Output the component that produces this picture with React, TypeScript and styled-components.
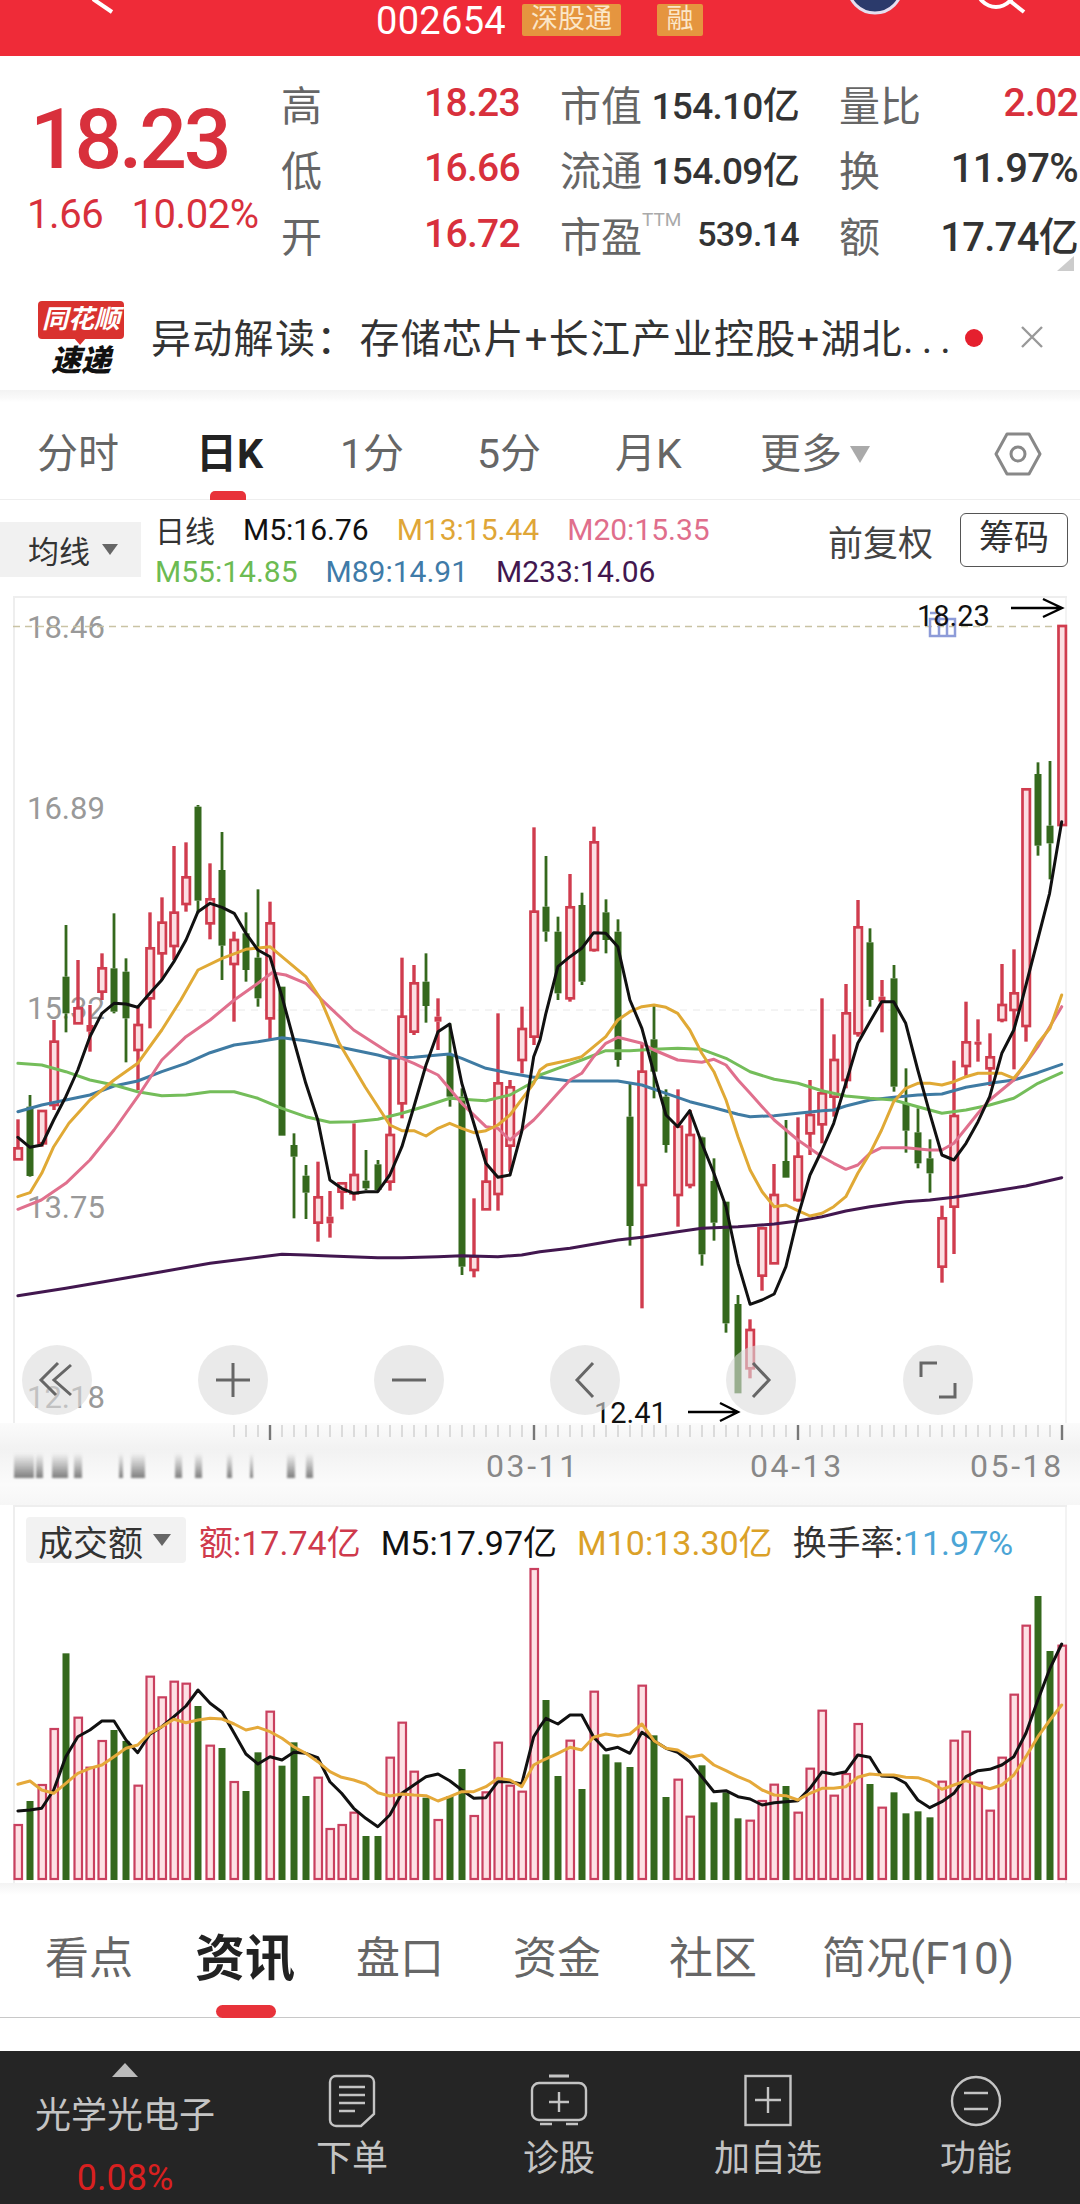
import React from "react";
import styled, { createGlobalStyle } from "styled-components";

const FONT = `Roboto, "Noto Sans CJK SC", sans-serif`;

const Global = createGlobalStyle`
  html, body { margin: 0; padding: 0; background: #fff; }
  body { width: 1080px; height: 2204px; overflow: hidden; font-family: ${FONT}; }
  * { box-sizing: border-box; }
`;

const Page = styled.div`
  width: 1080px;
  height: 2204px;
  display: flex;
  flex-direction: column;
  overflow: hidden;
  background: #fff;
`;

/* ---------- header ---------- */
const Header = styled.header`
  height: 56px;
  flex: none;
  display: flex;
  align-items: flex-start;
  background: #ef2b38;
  overflow: hidden;
`;
const HeaderIcon = styled.svg<{ $left: number }>`
  flex: none;
  display: block;
  margin-left: ${(p) => p.$left}px;
`;
const Code = styled.div`
  flex: none;
  width: 146px;
  margin-left: 262px;
  height: 45px;
  line-height: 45px;
  font-size: 38px;
  color: #fff;
  letter-spacing: 0.3px;
  transform: translateY(-1px);
`;
const Tag = styled.div<{ $w: number; $left?: number }>`
  flex: none;
  width: ${(p) => p.$w}px;
  margin-left: ${(p) => p.$left ?? 0}px;
  margin-top: 4px;
  height: 32px;
  line-height: 31px;
  background: #e5953f;
  color: #fbe6c8;
  font-size: 27px;
  text-align: center;
  white-space: nowrap;
  border-radius: 2px;
`;

/* ---------- quote ---------- */
const Quote = styled.section`
  height: 215px;
  flex: none;
  display: flex;
`;
const PriceBlock = styled.div`
  flex: none;
  width: 281px;
  padding: 39px 0 0 27px;
  color: #d8303c;
`;
const BigPrice = styled.div`
  font-size: 84px;
  line-height: 90px;
  font-weight: 500;
  letter-spacing: -3.2px;
  margin-left: 3px;
`;
const PriceChange = styled.div`
  display: flex;
  gap: 28px;
  margin-top: 8px;
  font-size: 40px;
  line-height: 44px;
  letter-spacing: -0.4px;
  white-space: nowrap;
`;
const Stats = styled.div`
  padding-top: 14px;
  display: grid;
  grid-template-columns: repeat(3, 239px);
  grid-auto-rows: 65.5px;
  column-gap: 40px;
  position: relative;
  width: 799px;
`;
const Stat = styled.div`
  display: flex;
  align-items: center;
  justify-content: space-between;
  white-space: nowrap;
`;
const StatLabel = styled.span`
  display: inline-flex;
  align-items: flex-start;
  font-size: 41px;
  color: #666;
`;
const Ttm = styled.sup`
  font-size: 19px;
  line-height: 20px;
  color: #aaa;
  margin: 6px 0 0 0;
  vertical-align: baseline;
`;
const StatValue = styled.span<{ $red?: boolean; $size?: number }>`
  font-size: ${(p) => p.$size ?? 37}px;
  font-weight: 500;
  color: ${(p) => (p.$red ? "#d8303c" : "#333")};
  letter-spacing: -0.7px;
`;
const CornerMark = styled.div`
  position: absolute;
  right: 6px;
  bottom: 0;
  width: 0;
  height: 0;
  border-left: 17px solid transparent;
  border-bottom: 15px solid #ccc;
`;

/* ---------- news ---------- */
const News = styled.section`
  height: 119px;
  flex: none;
  display: flex;
  align-items: center;
  padding: 15px 0 0 38px;
`;
const Logo = styled.div`
  flex: none;
  width: 86px;
  display: flex;
  flex-direction: column;
  align-items: center;
  gap: 7px;
`;
const LogoBadge = styled.div`
  position: relative;
  width: 86px;
  height: 38px;
  line-height: 36px;
  background: #d9322f;
  border-radius: 4px;
  color: #fff;
  font-size: 26px;
  font-weight: 700;
  font-style: italic;
  text-align: center;
  white-space: nowrap;
  &::after {
    content: "";
    position: absolute;
    left: 36px;
    bottom: -6px;
    border-left: 6px solid transparent;
    border-right: 6px solid transparent;
    border-top: 7px solid #d9322f;
  }
`;
const LogoSub = styled.div`
  font-size: 30px;
  line-height: 30px;
  font-weight: 900;
  font-style: italic;
  color: #111;
  white-space: nowrap;
`;
const NewsText = styled.div`
  flex: none;
  width: 799px;
  margin-left: 27px;
  padding-top: 3px;
  font-size: 40px;
  line-height: 50px;
  letter-spacing: 1.3px;
  color: #333;
  white-space: nowrap;
`;
const NewsColon = styled.span`
  margin-right: 2px;
`;
const NewsDots = styled.span`
  letter-spacing: 8px;
`;
const NewsDot = styled.span`
  flex: none;
  width: 18px;
  height: 18px;
  border-radius: 50%;
  background: #e5202e;
  margin: 0 0 1px 15px;
`;
const CloseIcon = styled.svg`
  flex: none;
  margin: 0 0 2px 37px;
`;
const Separator = styled.div`
  height: 12px;
  flex: none;
  background: linear-gradient(#f3f3f3, #fafafa 70%, #fff);
`;

/* ---------- period tabs ---------- */
const PeriodBar = styled.nav`
  height: 98px;
  flex: none;
  position: relative;
  display: flex;
  align-items: center;
  padding: 7px 0 0 37px;
  border-bottom: 1px solid #eee;
`;
const Period = styled.div<{ $w: number; $active?: boolean }>`
  flex: none;
  width: ${(p) => p.$w}px;
  font-size: 41px;
  line-height: 50px;
  white-space: nowrap;
  color: ${(p) => (p.$active ? "#222" : "#666")};
  font-weight: ${(p) => (p.$active ? 700 : 400)};
`;
const PeriodMark = styled.div`
  position: absolute;
  left: 210px;
  bottom: -1px;
  width: 36px;
  height: 9px;
  border-radius: 5px 5px 0 0;
  background: #e8323a;
`;
const CaretDown = styled.span<{ $w: number; $h: number; $color: string }>`
  flex: none;
  width: 0;
  height: 0;
  border-left: ${(p) => p.$w / 2}px solid transparent;
  border-right: ${(p) => p.$w / 2}px solid transparent;
  border-top: ${(p) => p.$h}px solid ${(p) => p.$color};
`;
const HexIcon = styled.svg`
  flex: none;
  margin-left: 124px;
`;

/* ---------- MA legend ---------- */
const LegendBar = styled.section`
  height: 96px;
  flex: none;
  display: flex;
`;
const Selector = styled.div`
  flex: none;
  width: 141px;
  height: 55px;
  margin-top: 22px;
  display: flex;
  align-items: center;
  gap: 12px;
  padding-left: 28px;
  background: #f1f1f1;
  font-size: 31px;
  color: #333;
`;
const LegendLines = styled.div`
  flex: none;
  width: 660px;
  padding: 8px 0 0 14px;
`;
const LegendLine = styled.div`
  display: flex;
  gap: 28px;
  height: 42px;
  align-items: center;
  white-space: nowrap;
`;
const LegendItem = styled.span<{ $color: string; $size?: number }>`
  font-size: ${(p) => p.$size ?? 30}px;
  color: ${(p) => p.$color};
`;
const Adjust = styled.div`
  margin: 24px 0 0 27px;
  font-size: 35px;
  line-height: 42px;
  color: #444;
  white-space: nowrap;
`;
const ChipButton = styled.div`
  margin: 13px 0 0 27px;
  width: 108px;
  height: 54px;
  line-height: 50px;
  border: 1px solid #555;
  border-radius: 6px;
  text-align: center;
  font-size: 35px;
  color: #333;
`;

/* ---------- charts ---------- */
const ChartFrame = styled.div`
  position: relative;
  flex: none;
  width: 1054px;
  height: 827px;
  margin-left: 13px;
  box-shadow: inset 2px 2px 0 #eeeeee, inset -2px 0 0 #f3f3f3;
`;
const ChartSvg = styled.svg`
  display: block;
  position: relative;
  overflow: visible;
`;
const RoundButton = styled.div<{ $x: number }>`
  position: absolute;
  left: ${(p) => p.$x - 13 - 35}px;
  top: 749px;
  width: 70px;
  height: 70px;
  border-radius: 50%;
  background: rgba(220, 220, 220, 0.6);
  display: flex;
  align-items: center;
  justify-content: center;
`;
const AxisBand = styled.div`
  flex: none;
  height: 82px;
  background: linear-gradient(#fbfbfb, #f2f2f2 32%, #fbfbfb 75%, #f6f6f6);
`;
const Ticks = styled.svg`
  display: block;
`;
const AxisLabels = styled.div`
  display: grid;
  grid-template-columns: 486px 264px 220px 100px;
  height: 46px;
  align-items: center;
  position: relative;
`;
const AxisDate = styled.span<{ $column?: number }>`
  grid-column: ${(p) => p.$column ?? "auto"};
  font-size: 32px;
  line-height: 40px;
  letter-spacing: 2.6px;
  color: #888;
  white-space: nowrap;
`;
const VolumePanel = styled.section`
  flex: none;
  width: 1054px;
  height: 378px;
  margin-left: 13px;
  background: #fff;
  box-shadow: inset 2px 2px 0 #eeeeee, inset -2px 0 0 #f3f3f3;
`;
const VolumeHeader = styled.div`
  height: 58px;
  padding: 12px 0 0 13px;
  display: flex;
  align-items: center;
  white-space: nowrap;
`;
const VolumeSelect = styled.div`
  flex: none;
  width: 160px;
  height: 46px;
  display: flex;
  align-items: center;
  gap: 10px;
  padding-left: 12px;
  background: #f2f2f2;
  border-radius: 4px;
  font-size: 35px;
  color: #333;
`;
const VolumeItems = styled.div`
  display: flex;
  gap: 20px;
  margin-left: 13px;
`;
const Spacer = styled.div<{ $h: number; $band?: boolean }>`
  flex: none;
  height: ${(p) => p.$h}px;
  background: ${(p) => (p.$band ? "linear-gradient(#f3f3f3, #fff)" : "#fff")};
`;

/* ---------- bottom tabs ---------- */
const InfoTabs = styled.nav`
  position: relative;
  flex: none;
  height: 123px;
  display: flex;
  align-items: center;
  padding: 6px 0 0 45px;
  border-bottom: 1px solid #c8c8c8;
`;
const InfoTab = styled.div<{ $w: number; $active?: boolean }>`
  flex: none;
  width: ${(p) => p.$w}px;
  font-size: ${(p) => (p.$active ? 50 : 44)}px;
  line-height: 56px;
  font-weight: ${(p) => (p.$active ? 700 : 400)};
  color: ${(p) => (p.$active ? "#222" : "#666")};
  white-space: nowrap;
`;
const InfoMark = styled.div`
  position: absolute;
  left: 216px;
  bottom: -1px;
  width: 60px;
  height: 13px;
  border-radius: 7px;
  background: #e8323a;
`;

/* ---------- footer ---------- */
const Footer = styled.footer`
  flex: none;
  height: 153px;
  margin-top: 33px;
  display: flex;
  background: #252525;
  color: #c4c4c4;
`;
const Sector = styled.div`
  flex: none;
  width: 250px;
  display: flex;
  flex-direction: column;
  align-items: center;
  padding-top: 12px;
`;
const SectorArrow = styled.span`
  width: 0;
  height: 0;
  border-left: 13px solid transparent;
  border-right: 13px solid transparent;
  border-bottom: 14px solid #bbb;
`;
const SectorName = styled.div`
  margin-top: 17px;
  font-size: 36px;
  line-height: 44px;
  white-space: nowrap;
`;
const SectorPct = styled.div`
  margin-top: 18px;
  font-size: 36px;
  line-height: 44px;
  color: #d82020;
`;
const Action = styled.div<{ $w: number }>`
  flex: none;
  width: ${(p) => p.$w}px;
  display: flex;
  flex-direction: column;
  align-items: center;
  padding-top: 23px;
`;
const ActionIcon = styled.svg`
  display: block;
`;
const ActionLabel = styled.div`
  margin-top: 9px;
  font-size: 36px;
  line-height: 44px;
  white-space: nowrap;
`;

/* ---------- chart data (measured on the reference) ---------- */
type Pt = [number, number];
const L = 2.904;
const pts = (xo: number, yo: number, a: Pt[]): Pt[] => a.map(([x, y]) => [xo + x / L, yo + y / 3]);
const TL = (a: Pt[]) => pts(0, 500, a);
const BL = (a: Pt[]) => pts(0, 1000, a);
const TR = (a: Pt[]) => pts(540, 500, a);
const BR = (a: Pt[]) => pts(540, 1000, a);
const toLine = (a: Pt[]) => a.map(([x, y]) => `${x.toFixed(1)},${y.toFixed(1)}`).join(" ");

const CANDLES: [string, number, number, number, number][] = [
  ["r",1858,1945,1978,1980],["g",1785,1820,2028,2030],["r",1833,1833,1930,1940],["r",1560,1625,1815,1830],
  ["g",1275,1430,1540,1597],["r",1380,1525,1570,1570],["r",1515,1575,1595,1655],["r",1360,1405,1475,1500],
  ["g",1240,1405,1535,1540],["g",1375,1415,1555,1687],["r",1520,1575,1650,1770],["r",1237,1345,1495,1585],
  ["r",1192,1268,1360,1440],["r",1038,1238,1338,1380],["r",1027,1132,1212,1235],["g",915,920,1202,1240],
  ["r",1090,1198,1270,1318],["g",996,1110,1337,1440],["r",1295,1320,1392,1565],["g",1237,1300,1410,1445],
  ["g",1168,1373,1495,1520],["r",1205,1270,1555,1620],["g",1460,1460,1907,1907],["g",1900,1935,1970,2155],
  ["g",1995,2027,2078,2157],["r",1985,2092,2168,2225],["r",2073,2150,2170,2213],["r",2050,2050,2075,2128],
  ["r",1870,2025,2080,2102],["g",1950,2042,2065,2070],["g",1980,1993,2070,2075],["r",1670,1905,2045,2072],
  ["r",1373,1550,1810,1855],["r",1395,1450,1595,1605],["g",1360,1445,1518,1568],["r",1495,1550,1565,1650],
  ["g",1570,1665,1790,1820],["g",1765,1790,2300,2325],["r",2095,2270,2310,2332],["r",1945,2045,2128,2130],
  ["r",1540,1750,2082,2132],["r",1740,1762,1937,2015],["r",1520,1587,1680,1720],["r",982,1235,1610,1635],
  ["g",1068,1220,1295,1325],["g",1250,1295,1480,1500],["r",1122,1222,1495,1505],["g",1178,1215,1445,1455],
  ["r",980,1027,1350,1355],["g",1198,1237,1320,1360],["g",1258,1295,1680,1700],["g",1750,1850,2178,2237],
  ["r",1630,1715,2055,2425],["g",1515,1618,1715,1795],["g",1768,1790,1935,1958],["r",1768,1880,2085,2180],
  ["r",1830,1905,2055,2065],["g",1910,1912,2263,2297],["g",1975,2043,2168,2222],["g",2105,2105,2470,2498],
  ["g",2385,2412,2680,2680],["r",2458,2490,2605,2635],["r",2180,2185,2327,2372],["r",1992,2085,2290,2290],
  ["g",1860,1983,2033,2033],["r",1852,1970,2100,2105],["r",1740,1845,1900,1965],["r",1495,1780,1873,1930],
  ["r",1603,1680,1790,1850],["r",1452,1540,1740,1765],["r",1200,1282,1600,1610],["g",1285,1327,1500,1520],
  ["r",1440,1490,1505,1597],["g",1395,1435,1760,1775],["g",1705,1810,1892,1958],["g",1825,1897,1990,2005],
  ["g",1918,1975,2020,2078],["r",2117,2155,2300,2348],["r",1682,1848,2120,2262],["r",1505,1627,1698,1730],
  ["r",1558,1625,1630,1685],["r",1600,1672,1705,1758],["r",1392,1515,1560,1567],["r",1348,1480,1530,1708],
  ["r",868,868,1578,1625],["g",787,822,1037,1067],["g",783,977,1030,1138],["r",378,378,975,975],
];

const VOLUMES: [string, number][] = [
  ["r",975],["g",903],["r",855],["r",687],["g",460],["r",653],["r",803],["r",723],["g",690],["g",723],["r",857],
  ["r",530],["r",592],["r",545],["r",551],["g",618],["r",737],["g",744],["r",846],["g",873],["g",757],["r",635],
  ["g",797],["g",727],["g",888],["r",833],["r",987],["r",975],["r",938],["g",1008],["g",1008],["r",773],["r",668],
  ["r",815],["g",893],["r",960],["g",888],["g",807],["r",948],["r",877],["r",728],["r",857],["r",875],["r",207],
  ["g",600],["g",828],["r",722],["g",867],["r",575],["g",763],["g",787],["g",801],["r",557],["g",706],["g",891],
  ["r",839],["r",950],["g",796],["g",907],["g",877],["g",955],["r",962],["r",903],["r",854],["g",858],["r",938],
  ["r",806],["r",632],["r",887],["r",822],["r",672],["g",852],["r",923],["g",877],["g",940],["g",934],["g",952],
  ["r",845],["r",722],["r",695],["r",848],["r",932],["r",773],["r",584],["r",377],["g",288],["g",453],["r",437],
];

const M5 = [
  ...BL([[52,412],[87,442],[121,435],[156,360],[191,290],[226,210],[261,110],[296,40],[331,10],[366,12],[400,22],[435,-20]]),
  ...TL([[470,1440],[505,1385],[540,1320],[575,1235],[610,1210],[645,1222],[680,1240],[714,1300],[749,1350],[784,1370],[819,1490]]),
  ...BL([[853,120],[888,250],[923,360],[958,540],[992,565],[1027,580],[1062,575],[1097,575],[1132,525],[1167,440],[1202,320],[1237,195],[1272,95],[1306,72],[1341,250],[1376,370],[1411,490],[1446,532],[1481,525],[1515,395],[1550,170]]),
  ...BR([[0,120],[17,40],[52,-100],[87,-130],[121,-155],[156,-202],[191,-200],[226,-160],[261,0],[296,85],[331,220],[366,345],[400,380],[435,332],[470,430],[505,520],[540,620],[575,790],[610,913],[645,900],[680,882],[714,800],[749,650],[784,525],[819,450],[853,370],[888,250],[923,130],[958,65],[992,5],[1027,5],[1062,70],[1097,210],[1132,340],[1167,465],[1202,480],[1237,430],[1272,365],[1306,290],[1341,160],[1376,90],[1400,0]]),
  ...TR([[1445,1320],[1480,1180],[1515,965]]),
];
const M13 = [
  ...BL([[52,590],[87,578],[121,520],[156,440],[200,370],[261,300],[331,240],[400,190],[470,90],[525,0]]),
  ...TL([[575,1410],[645,1375],[714,1348],[784,1340],[888,1430],[930,1495]]),
  ...BL([[985,130],[1060,260],[1132,375],[1167,392],[1202,392],[1237,408],[1272,385],[1306,370],[1341,385],[1376,398],[1411,392],[1446,375],[1481,345],[1550,250]]),
  ...BR([[0,210],[20,195],[87,180],[121,170],[191,110],[226,60],[261,35],[296,20],[331,15],[366,22],[400,40],[435,90],[470,160],[505,215],[540,300],[575,410],[610,510],[645,575],[680,620],[714,615],[749,632],[784,648],[819,640],[853,620],[888,590],[923,520],[958,460],[992,390],[1027,305],[1062,265],[1097,250],[1132,250],[1167,255],[1202,245],[1237,230],[1272,220],[1306,220],[1341,220],[1376,235],[1411,190],[1446,130],[1481,85],[1515,-15]]),
];
const M20 = [
  ...BL([[52,628],[120,600],[191,550],[261,480],[331,390],[400,290],[470,180],[540,110],[610,60],[680,0]]),
  ...TL([[749,1450],[790,1418],[830,1425],[888,1450],[930,1495]]),
  ...BL([[1027,90],[1132,160],[1202,190],[1272,225],[1341,310],[1411,380],[1446,385],[1481,420],[1550,360]]),
  ...BR([[0,340],[52,280],[87,240],[121,220],[156,170],[191,130],[226,112],[296,130],[331,150],[400,180],[470,187],[505,178],[540,195],[575,240],[610,280],[645,320],[680,360],[749,420],[819,470],[853,490],[888,508],[923,495],[958,460],[992,443],[1062,443],[1132,450],[1167,450],[1202,430],[1237,385],[1272,340],[1306,300],[1376,240],[1446,140],[1515,20]]),
];
const M55 = [
  ...BL([[52,190],[121,195],[191,215],[261,240],[331,255],[400,275],[470,287],[540,285],[610,275],[680,275],[749,295],[819,325],[888,350],[958,367],[1027,365],[1097,358],[1167,340],[1237,318],[1306,295],[1376,300],[1411,302],[1481,285],[1550,245]]),
  ...BR([[0,225],[52,205],[121,180],[191,152],[261,152],[331,148],[400,145],[470,148],[540,175],[610,215],[680,238],[749,250],[819,272],[888,288],[958,295],[1027,300],[1097,320],[1167,340],[1237,330],[1306,315],[1376,295],[1446,250],[1515,218]]),
];
const M89 = [
  ...BL([[52,335],[121,315],[191,300],[261,285],[331,258],[400,243],[470,215],[540,190],[610,158],[680,135],[749,125],[819,113],[888,122],[958,135],[1027,150],[1097,165],[1132,175],[1202,172],[1272,165],[1306,162],[1341,175],[1411,205],[1481,220],[1550,232]]),
  ...BR([[0,232],[87,243],[226,243],[296,255],[366,280],[435,305],[505,323],[575,343],[610,350],[680,347],[749,340],[819,332],[853,330],[888,318],[958,300],[1027,292],[1097,285],[1167,282],[1237,262],[1306,250],[1376,240],[1446,218],[1515,193]]),
];
const M233 = [
  ...BL([[52,887],[191,865],[331,840],[470,815],[610,790],[749,772],[819,763],[888,765],[958,768],[1097,773],[1167,773],[1272,770],[1341,767],[1446,770],[1515,765],[1568,755]]),
  ...BR([[87,745],[226,720],[296,712],[400,695],[470,685],[575,680],[680,672],[749,663],[819,650],[888,633],[958,620],[1062,605],[1132,600],[1202,592],[1306,575],[1411,558],[1515,533]]),
];

const V5 = [
  ...pts(0,1500,[[52,933],[87,930],[121,925],[156,870],[191,770],[226,710],[261,690],[296,663],[331,663],[366,720],[400,758],[435,703],[470,680],[505,650],[540,618],[575,570],[610,610],[645,637],[680,700],[714,762],[749,792],[784,770],[819,780],[853,757],[888,760],[923,773],[958,845],[992,880],[1027,925],[1062,955],[1097,980],[1132,945],[1167,880],[1202,855],[1237,830],[1272,822],[1306,842],[1341,870],[1376,895],[1411,893],[1446,845],[1481,845],[1515,852],[1550,710]]),
  ...pts(540,1500,[[0,680],[17,655],[52,672],[87,645],[121,645],[156,712],[191,750],[226,742],[261,760],[296,697],[331,722],[366,745],[400,757],[435,785],[470,830],[505,875],[540,872],[575,890],[610,897],[645,915],[680,908],[714,905],[749,902],[784,865],[819,816],[853,823],[888,815],[923,765],[958,772],[992,828],[1027,830],[1062,850],[1097,900],[1132,923],[1167,905],[1202,880],[1237,830],[1272,812],[1306,808],[1341,795],[1376,770],[1411,700],[1446,600],[1481,505],[1515,432]]),
];
const V10 = [
  ...pts(0,1500,[[52,853],[87,843],[121,870],[156,880],[191,850],[226,820],[261,805],[296,795],[331,770],[366,745],[400,735],[435,700],[470,680],[505,658],[540,668],[575,660],[610,655],[645,657],[680,672],[714,690],[749,682],[784,695],[819,715],[853,740],[888,760],[923,785],[958,815],[992,832],[1027,840],[1062,852],[1097,878],[1132,888],[1167,882],[1202,885],[1237,887],[1272,903],[1306,890],[1341,875],[1376,875],[1411,860],[1446,835],[1481,840],[1515,860],[1550,795]]),
  ...pts(540,1500,[[0,785],[52,760],[87,742],[121,750],[156,712],[191,702],[226,708],[261,702],[296,672],[331,722],[366,745],[400,750],[435,772],[470,765],[505,795],[540,812],[575,830],[610,845],[645,870],[680,885],[714,887],[749,900],[784,880],[819,865],[853,865],[888,860],[923,832],[958,822],[992,825],[1027,825],[1062,832],[1097,833],[1132,845],[1167,868],[1202,855],[1237,842],[1272,855],[1306,866],[1341,855],[1376,825],[1411,770],[1446,710],[1481,660],[1515,615]]),
];

const barX = (i: number) => 18 + 12 * i;
const uy = (u: number) => 500 + u / 3;
const RED = "#d03c4e";
const GREEN = "#35691d";

const Candle = ({ i, c }: { i: number; c: [string, number, number, number, number] }) => {
  const [kind, hi, top, bot, lo] = c;
  const x = barX(i);
  const isRed = kind === "r";
  const h = uy(bot) - uy(top);
  const wick = isRed ? 3.4 : 2.8;
  const color = isRed ? RED : GREEN;
  return (
    <g>
      <line x1={x} x2={x} y1={uy(hi)} y2={uy(top)} stroke={color} strokeWidth={wick} />
      <line x1={x} x2={x} y1={uy(bot)} y2={uy(lo)} stroke={color} strokeWidth={wick} />
      {isRed && h > 8 ? (
        <rect x={x - 3.5} y={uy(top)} width={7.4} height={h} fill="#fbdfe2" stroke={RED} strokeWidth={2.7} />
      ) : (
        <rect x={x - 3.5} y={uy(top)} width={7} height={Math.max(h, 3)} fill={color} />
      )}
    </g>
  );
};

const PriceChart = () => (
  <ChartSvg width={1054} height={827} viewBox="13 596 1054 827">
    <g fontFamily={FONT} fontSize={31} fill="#999">
      <text x={27} y={638}>18.46</text>
      <text x={27} y={819}>16.89</text>
      <text x={27} y={1019}>15.32</text>
      <text x={27} y={1218}>13.75</text>
      <text x={27} y={1408}>12.18</text>
    </g>
    <line x1={13} x2={1058} y1={626.5} y2={626.5} stroke="#c9c3a4" strokeWidth={1.6} strokeDasharray="7 5" />
    <line x1={160} x2={900} y1={1010} y2={1010} stroke="#e8e8e8" strokeWidth={1} strokeDasharray="7 6" />
    <g fill="none" stroke="#8d9bd8" strokeWidth={2.5}>
      <rect x={930} y={619} width={25} height={17} />
      <path d="M930 613h9v6M939 619v17M947 619v17" />
    </g>
    {CANDLES.map((c, i) => <Candle key={i} i={i} c={c} />)}
    <g fill="none" strokeWidth={3} strokeLinejoin="round" strokeLinecap="round">
      <polyline points={toLine(M233)} stroke="#42174f" />
      <polyline points={toLine(M89)} stroke="#3f7ba3" />
      <polyline points={toLine(M55)} stroke="#74bd5a" />
      <polyline points={toLine(M20)} stroke="#e0708d" />
      <polyline points={toLine(M13)} stroke="#e0a935" />
      <polyline points={toLine(M5)} stroke="#111" />
    </g>
    <text x={917} y={626} fontFamily={FONT} fontSize={29} fill="#111">18.23</text>
    <g fill="none" stroke="#000" strokeWidth={2.4}>
      <path d="M1011 608h51M1043 599l19 9-19 9" />
      <path d="M688 1412h50M720 1403l18 9-18 9" />
    </g>
    <text x={594} y={1423} fontFamily={FONT} fontSize={29} fill="#111">12.41</text>
  </ChartSvg>
);

const VolumeChart = () => (
  <ChartSvg width={1054} height={320} viewBox="13 1563 1054 320">
    {VOLUMES.map(([k, t], i) => {
      const y = 1500 + t / 3;
      const x = barX(i);
      return k === "r" ? (
        <rect key={i} x={x - 3.5} y={y} width={7.5} height={1879 - y} fill="#fde0e4" stroke="#c9405f" strokeWidth={2.2} />
      ) : (
        <rect key={i} x={x - 3.5} y={y} width={7} height={1880 - y} fill={GREEN} />
      );
    })}
    <g fill="none" strokeWidth={3} strokeLinejoin="round" strokeLinecap="round">
      <polyline points={toLine(V5)} stroke="#111" />
      <polyline points={toLine(V10)} stroke="#e5a93a" />
    </g>
  </ChartSvg>
);

const MINOR = Array.from({ length: 70 }, (_, i) => 234 + 12 * i).filter((x) => x < 1060);
const SMUDGE: [number, number][] = [[14,20],[36,7],[52,16],[74,8],[119,4],[131,14],[175,7],[195,7],[227,5],[250,3],[287,8],[306,7]];

const AxisTicks = () => (
  <Ticks width={1080} height={20} viewBox="0 0 1080 20">
    {MINOR.map((x) => <line key={x} x1={x} x2={x} y1={2} y2={14} stroke="#c8c8c8" strokeWidth={1.2} />)}
    {[270, 534, 798, 1062].map((x) => <line key={x} x1={x} x2={x} y1={2} y2={17} stroke="#777" strokeWidth={2.4} />)}
  </Ticks>
);

const Smudge = styled.svg`
  position: absolute;
  left: 0;
  top: 0;
`;

const icon = { fill: "none", stroke: "#c4c4c4", strokeWidth: 2.4 };
const btn = { fill: "none", stroke: "#666", strokeWidth: 3 };

const App = () => (
  <Page>
    <Global />
    <Header>
      <HeaderIcon $left={90} width={24} height={14} viewBox="0 0 24 14">
        <path d="M3 -1 22 12" stroke="#fff" strokeWidth={4} fill="none" />
      </HeaderIcon>
      <Code>002654</Code>
      <Tag $w={99}>深股通</Tag>
      <Tag $w={46} $left={36}>融</Tag>
      <HeaderIcon $left={143} width={58} height={16} viewBox="0 0 58 16">
        <circle cx={29} cy={-14} r={27} fill="#2b3a6b" stroke="#e4dff0" strokeWidth={3} />
      </HeaderIcon>
      <HeaderIcon $left={70} width={52} height={14} viewBox="0 0 52 14">
        <circle cx={22} cy={-12} r={19} fill="none" stroke="#fff" strokeWidth={4} />
        <path d="M36 1 50 12" stroke="#fff" strokeWidth={4} />
      </HeaderIcon>
    </Header>

    <Quote>
      <PriceBlock>
        <BigPrice>18.23</BigPrice>
        <PriceChange>
          <span>1.66</span>
          <span>10.02%</span>
        </PriceChange>
      </PriceBlock>
      <Stats>
        <Stat><StatLabel>高</StatLabel><StatValue $red $size={39}>18.23</StatValue></Stat>
        <Stat><StatLabel>市值</StatLabel><StatValue>154.10亿</StatValue></Stat>
        <Stat><StatLabel>量比</StatLabel><StatValue $red $size={39}>2.02</StatValue></Stat>
        <Stat><StatLabel>低</StatLabel><StatValue $red $size={39}>16.66</StatValue></Stat>
        <Stat><StatLabel>流通</StatLabel><StatValue>154.09亿</StatValue></Stat>
        <Stat><StatLabel>换</StatLabel><StatValue $size={40}>11.97%</StatValue></Stat>
        <Stat><StatLabel>开</StatLabel><StatValue $red $size={39}>16.72</StatValue></Stat>
        <Stat><StatLabel>市盈<Ttm>TTM</Ttm></StatLabel><StatValue $size={34}>539.14</StatValue></Stat>
        <Stat><StatLabel>额</StatLabel><StatValue $size={40}>17.74亿</StatValue></Stat>
        <CornerMark />
      </Stats>
    </Quote>

    <News>
      <Logo>
        <LogoBadge>同花顺</LogoBadge>
        <LogoSub>速递</LogoSub>
      </Logo>
      <NewsText>
        <NewsColon>异动解读：</NewsColon>存储芯片+长江产业控股+湖北<NewsDots>...</NewsDots>
      </NewsText>
      <NewsDot />
      <CloseIcon width={24} height={24} viewBox="0 0 24 24">
        <path d="M2 2 22 22M22 2 2 22" stroke="#999" strokeWidth={2.4} />
      </CloseIcon>
    </News>
    <Separator />

    <PeriodBar>
      <Period $w={159}>分时</Period>
      <Period $w={144} $active>日K</Period>
      <Period $w={137}>1分</Period>
      <Period $w={138}>5分</Period>
      <Period $w={145}>月K</Period>
      <Period $w={90}>更多</Period>
      <CaretDown $w={21} $h={17} $color="#aaa" />
      <HexIcon width={48} height={44} viewBox="0 0 48 44">
        <path d="M13 2h22l11 20-11 20H13L2 22Z" fill="none" stroke="#888" strokeWidth={3} strokeLinejoin="round" />
        <circle cx={24} cy={22} r={7} fill="none" stroke="#888" strokeWidth={3} />
      </HexIcon>
      <PeriodMark />
    </PeriodBar>

    <LegendBar>
      <Selector>均线<CaretDown $w={17} $h={11} $color="#666" /></Selector>
      <LegendLines>
        <LegendLine>
          <LegendItem $color="#333">日线</LegendItem>
          <LegendItem $color="#111">M5:16.76</LegendItem>
          <LegendItem $color="#dfa637">M13:15.44</LegendItem>
          <LegendItem $color="#e06e8c">M20:15.35</LegendItem>
        </LegendLine>
        <LegendLine>
          <LegendItem $color="#6cbb52">M55:14.85</LegendItem>
          <LegendItem $color="#3f7ba8">M89:14.91</LegendItem>
          <LegendItem $color="#42174f">M233:14.06</LegendItem>
        </LegendLine>
      </LegendLines>
      <Adjust>前复权</Adjust>
      <ChipButton>筹码</ChipButton>
    </LegendBar>

    <ChartFrame>
      <PriceChart />
      <RoundButton $x={57}>
        <svg width={38} height={38} viewBox="0 0 38 38"><path d="M20 2 3 19l15 15M33 4 16 19l17 15" {...btn} /></svg>
      </RoundButton>
      <RoundButton $x={233}>
        <svg width={36} height={36} viewBox="0 0 36 36"><path d="M18 1v34M1 18h34" {...btn} /></svg>
      </RoundButton>
      <RoundButton $x={409}>
        <svg width={36} height={36} viewBox="0 0 36 36"><path d="M1 18h34" {...btn} /></svg>
      </RoundButton>
      <RoundButton $x={585}>
        <svg width={22} height={38} viewBox="0 0 22 38"><path d="M19 2 3 19l16 17" {...btn} /></svg>
      </RoundButton>
      <RoundButton $x={761}>
        <svg width={22} height={38} viewBox="0 0 22 38"><path d="M3 2l16 17L3 36" {...btn} /></svg>
      </RoundButton>
      <RoundButton $x={938}>
        <svg width={38} height={38} viewBox="0 0 38 38"><path d="M2 16V2h16M36 22v14H20" {...btn} /></svg>
      </RoundButton>
    </ChartFrame>

    <AxisBand>
      <AxisTicks />
      <AxisLabels>
        <Smudge width={320} height={46} viewBox="0 0 320 46">
          <defs>
            <linearGradient id="sm" x1="0" y1="0" x2="0" y2="1">
              <stop offset="0" stopColor="#777" stopOpacity="0" />
              <stop offset="1" stopColor="#666" stopOpacity="0.85" />
            </linearGradient>
            <filter id="sb"><feGaussianBlur stdDeviation="1.2" /></filter>
          </defs>
          <g filter="url(#sb)">
            {SMUDGE.map(([x, w]) => <rect key={x} x={x} y={10} width={w} height={25} fill="url(#sm)" />)}
          </g>
        </Smudge>
        <AxisDate $column={2}>03-11</AxisDate>
        <AxisDate>04-13</AxisDate>
        <AxisDate>05-18</AxisDate>
      </AxisLabels>
    </AxisBand>

    <VolumePanel>
      <VolumeHeader>
        <VolumeSelect>成交额<CaretDown $w={18} $h={12} $color="#666" /></VolumeSelect>
        <VolumeItems>
          <LegendItem $color="#cf3a4c" $size={34}>额:17.74亿</LegendItem>
          <LegendItem $color="#111" $size={34}>M5:17.97亿</LegendItem>
          <LegendItem $color="#dba128" $size={34}>M10:13.30亿</LegendItem>
          <LegendItem $color="#333" $size={34}>换手率:<LegendItem $color="#4ba5d6" $size={34}>11.97%</LegendItem></LegendItem>
        </VolumeItems>
      </VolumeHeader>
      <VolumeChart />
    </VolumePanel>
    <Spacer $h={12} $band />

    <InfoTabs>
      <InfoTab $w={150}>看点</InfoTab>
      <InfoTab $w={161} $active>资讯</InfoTab>
      <InfoTab $w={157}>盘口</InfoTab>
      <InfoTab $w={156}>资金</InfoTab>
      <InfoTab $w={153}>社区</InfoTab>
      <InfoTab $w={200}>简况(F10)</InfoTab>
      <InfoMark />
    </InfoTabs>

    <Footer>
      <Sector>
        <SectorArrow />
        <SectorName>光学光电子</SectorName>
        <SectorPct>0.08%</SectorPct>
      </Sector>
      <Action $w={204}>
        <ActionIcon width={48} height={54} viewBox="0 0 48 54">
          <path d="M8 2h32a6 6 0 0 1 6 6v32L33 52H8a6 6 0 0 1-6-6V8a6 6 0 0 1 6-6Z" {...icon} />
          <path d="M11 13h26M11 21h26M11 29h26M11 37h16" {...icon} />
        </ActionIcon>
        <ActionLabel>下单</ActionLabel>
      </Action>
      <Action $w={210}>
        <ActionIcon width={58} height={54} viewBox="0 0 58 54">
          <path d="M19 2h20" {...icon} strokeWidth={3} />
          <rect x={2} y={9} width={54} height={37} rx={7} {...icon} />
          <path d="M29 18v20M19 28h20M10 50h12M36 50h12" {...icon} />
        </ActionIcon>
        <ActionLabel>诊股</ActionLabel>
      </Action>
      <Action $w={208}>
        <ActionIcon width={48} height={54} viewBox="0 0 48 54">
          <rect x={1.5} y={2} width={45} height={49} {...icon} />
          <path d="M24 13v26M11 26h26" {...icon} />
        </ActionIcon>
        <ActionLabel>加自选</ActionLabel>
      </Action>
      <Action $w={208}>
        <ActionIcon width={52} height={54} viewBox="0 0 52 54">
          <circle cx={26} cy={27} r={24} {...icon} />
          <path d="M14 19h24M14 35h24" {...icon} />
        </ActionIcon>
        <ActionLabel>功能</ActionLabel>
      </Action>
    </Footer>
  </Page>
);

export default App;
